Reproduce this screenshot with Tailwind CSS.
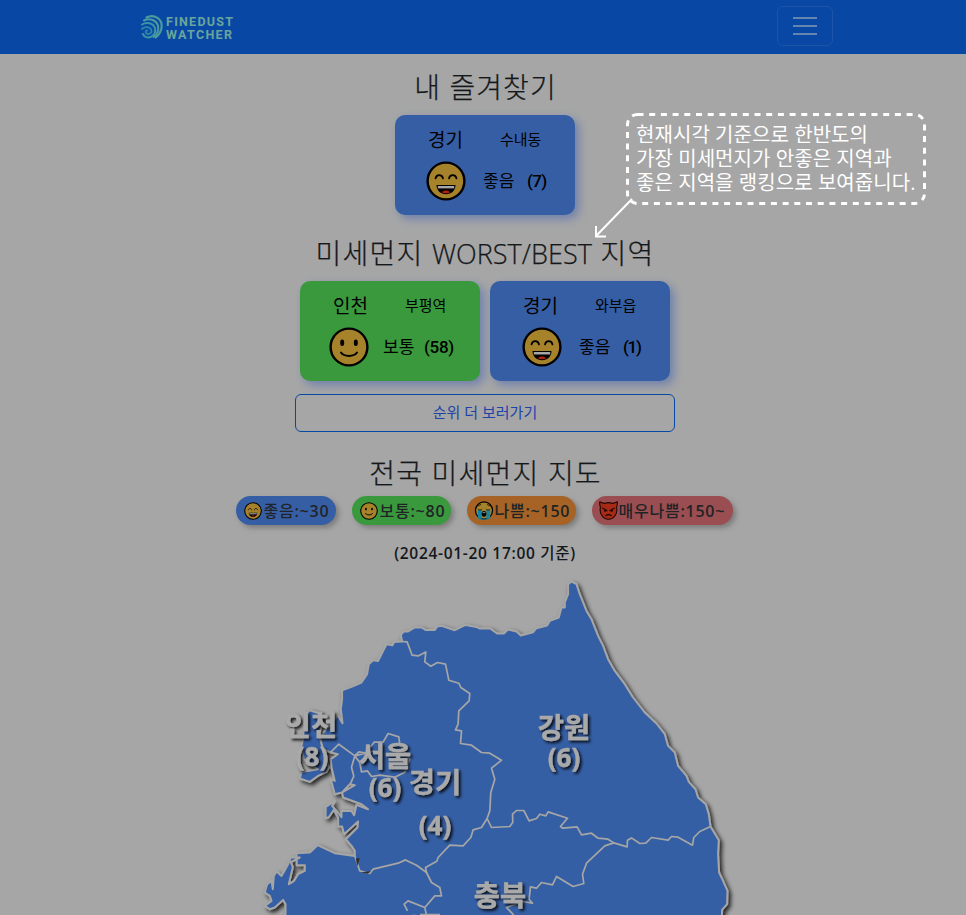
<!DOCTYPE html>
<html lang="ko">
<head>
<meta charset="utf-8">
<title>Finedust Watcher</title>
<script src="https://cdn.jsdelivr.net/npm/@tailwindcss/browser@4"></script>
</head>
<body class="w-[966px] h-[915px] overflow-hidden relative bg-[#a6a6a6] text-[#15181b] font-['Open_Sans','Noto_Sans_CJK_KR',sans-serif]">
<svg width="0" height="0" class="absolute" aria-hidden="true">
  <defs>
    <symbol id="grin" viewBox="0 0 40 40">
      <circle cx="20" cy="20" r="18.4" fill="#a6822a" stroke="#000" stroke-width="2.4"/>
      <path d="M9.5 17.500c.8-4.600 6.700-4.600 7.500 0M23 17.500c.8-4.600 6.700-4.600 7.500 0" fill="none" stroke="#000" stroke-width="1.700" stroke-linecap="round"/>
      <path d="M10.500 24h19c0 5.500-4 9.300-9.500 9.300s-9.500-3.800-9.500-9.300z" fill="#000"/>
      <path d="M11.800 25h16.400v2.400h-16.400z" fill="#a6a6a6"/>
      <path d="M16 31.200c1.500-2.200 6.500-2.200 8 0-1.500 1.400-6.500 1.400-8 0z" fill="#b02010"/>
    </symbol>
    <symbol id="smile" viewBox="0 0 40 40">
      <circle cx="20" cy="20" r="18.400" fill="#a6822a" stroke="#000" stroke-width="2.400"/>
      <ellipse cx="13.200" cy="15.700" rx="2" ry="3.200"/><ellipse cx="26.800" cy="15.700" rx="2" ry="3.200"/>
      <path d="M12 25.500c3 4.500 13 4.500 16 0" fill="none" stroke="#000" stroke-width="2" stroke-linecap="round"/>
    </symbol>
    <symbol id="cry" viewBox="0 0 40 40">
      <circle cx="20" cy="20" r="18" fill="#a6822a" stroke="#000" stroke-width="2.600"/>
      <path d="M7 19h8v18.500H7zM25 19h8v18.500h-8z" fill="#1287a6"/>
      <path d="M11 37h18v2H11z" fill="#1287a6"/>
      <path d="M7 11l7-4M33 11l-7-4M7 17.500c2 2 7 2 9 0M24 17.500c2 2 7 2 9 0" fill="none" stroke="#2c2108" stroke-width="2"/>
      <ellipse cx="20" cy="27" rx="5" ry="6"/><path d="M17 24.500h6" stroke="#a6a6a6" stroke-width="1.800"/>
    </symbol>
    <symbol id="devil" viewBox="0 0 40 40">
      <path d="M1.500 1.500c4 2.500 7 3 10.500 3.500 5-2 11-2 16 0 3.500-.5 6.500-1 10.500-3.500.5 5 0 8-1.500 12 3 12-5 25-17 25s-20-13-17-25c-1.500-4-2-7-1.500-12z" fill="#a62a14" stroke="#1a0502" stroke-width="2.200" stroke-linejoin="round"/>
      <path d="M8 15l9 5.500M32 15l-9 5.500M14.500 31c2.500-3 8.500-3 11 0" fill="none" stroke="#1a0502" stroke-width="2.400" stroke-linecap="round"/>
      <circle cx="13" cy="20.500" r="2.200"/><circle cx="27" cy="20.500" r="2.200"/>
    </symbol>
  </defs>
</svg>

<nav class="h-[54px] bg-[#0848a4] flex items-start justify-between pl-[140px] pr-[133px]">
  <svg class="mt-[12px]" width="96" height="30" viewBox="140 12 96 30">
    <g fill="none" stroke="#4a9aa0" stroke-linecap="round">
      <path d="M146.500 17.500c6-3.500 13.500 0 15 6 1 6-2 11.500-6 14" stroke-width="2.200"/>
      <path d="M144 20.500c6-3 12.500 0 14 5 1 5-1 9-4.500 11.500" stroke-width="2"/>
      <path d="M142 24.500c5-3 11-1.500 12.800 3 1.200 4-.5 7.500-4 9.500-3 1-6.500 0-8-3" stroke-width="2" stroke="#3b95a4"/>
      <path d="M142 29c3-3 8.500-2.500 9.500 1.500.5 3-3.500 4.500-5.500 2.500-1-1.200 0-2.500 1.300-2.500" stroke-width="1.800" stroke="#2c86a6"/>
    </g>
    <g fill="#6aa59b" font-family="Roboto, sans-serif" font-weight="700" font-size="12.500">
      <text x="166" y="26" textLength="67" lengthAdjust="spacing">FINEDUST</text>
      <text x="166" y="39" textLength="66" lengthAdjust="spacing">WATCHER</text>
    </g>
  </svg>
  <button class="mt-[6px] w-[56px] h-[40px] rounded-[6px] border border-[#1c55a6] flex items-center justify-center" aria-label="menu">
    <svg width="24" height="20" viewBox="0 0 24 20" stroke="#6485b0" stroke-width="2"><path d="M0 2h24M0 10h24M0 18h24"/></svg>
  </button>
</nav>

<main class="flex flex-col items-center w-[966px] pl-[4px] [&>h2]:[-webkit-text-stroke:0.25px_#15181b]">
  <h2 class="mt-[15px] h-[36px] leading-[36px] text-[28px] font-light whitespace-nowrap tracking-[1.100px] pl-[1px]">내 즐겨찾기</h2>
  <section class="mt-[10px] w-[180px] h-[100px] rounded-[10px] bg-[#365ea5] shadow-[4px_4px_10px_#6f80ad] text-black pt-[11px]">
    <div class="flex h-[28px] items-center pl-[33px]"><span class="w-[72px] text-[19px]">경기</span><span class="text-[15px] -mt-[2px]">수내동</span></div>
    <div class="flex h-[40px] mt-[7px] items-center pl-[31px]"><svg width="40" height="40"><use href="#grin"/></svg><span class="ml-[17px] w-[44px] text-[17px]">좋음</span><span class="font-[Roboto] font-medium text-[17px] tracking-[-0.6px] pt-[2px]">(7)</span></div>
  </section>

  <h2 class="mt-[20px] h-[36px] leading-[36px] text-[28px] font-light whitespace-nowrap tracking-[1.2px]">미세먼지 <span class="text-[27px] tracking-[0.05px]">WORST/BEST</span> 지역</h2>
  <div class="mt-[10px] flex gap-[10px]">
    <section class="w-[180px] h-[100px] rounded-[10px] bg-[#3a993d] shadow-[4px_4px_10px_#6f80ad] text-black pt-[11px]">
      <div class="flex h-[28px] items-center pl-[33px]"><span class="w-[72px] text-[19px]">인천</span><span class="text-[15px] -mt-[2px]">부평역</span></div>
      <div class="flex h-[40px] mt-[7px] items-center pl-[29px]"><svg width="40" height="40"><use href="#smile"/></svg><span class="ml-[14px] w-[41px] text-[17px]">보통</span><span class="font-[Roboto] font-medium text-[17px] tracking-[-0.3px] pt-[2px]">(58)</span></div>
    </section>
    <section class="w-[180px] h-[100px] rounded-[10px] bg-[#365ea5] shadow-[4px_4px_10px_#6f80ad] text-black pt-[11px]">
      <div class="flex h-[28px] items-center pl-[33px]"><span class="w-[72px] text-[19px]">경기</span><span class="text-[15px] -mt-[2px]">와부읍</span></div>
      <div class="flex h-[40px] mt-[7px] items-center pl-[32px]"><svg width="40" height="40"><use href="#grin"/></svg><span class="ml-[17px] w-[44px] text-[17px]">좋음</span><span class="font-[Roboto] font-medium text-[17px] tracking-[-1.300px] pt-[2px]">(1)</span></div>
    </section>
  </div>
  <button class="mt-[13px] w-[380px] h-[38px] rounded-[6px] border border-[#0848a4] text-[#1d42a8] text-[15px] pb-[2px]">순위 더 보러가기</button>

  <h2 class="mt-[23px] h-[36px] leading-[36px] text-[28px] font-light whitespace-nowrap tracking-[1.2px] pl-[1px]">전국 미세먼지 지도</h2>
  <div class="mt-[5px] -ml-[2px] flex gap-[16px] text-[#212426] text-[16px] font-semibold whitespace-nowrap tracking-[0.75px]">
    <div class="w-[100px] h-[29px] rounded-full bg-[#365ea5] shadow-[3px_3px_5px_#7d7d7d] flex items-center pl-[7px] gap-[1px]"><svg width="20" height="18"><use href="#grin"/></svg><span><span class="font-medium">좋음</span>:~30</span></div>
    <div class="w-[99px] h-[29px] rounded-full bg-[#3a993d] shadow-[3px_3px_5px_#7d7d7d] flex items-center pl-[7px] gap-[1px]"><svg width="20" height="18"><use href="#smile"/></svg><span><span class="font-medium">보통</span>:~80</span></div>
    <div class="w-[109px] h-[29px] rounded-full bg-[#a66325] shadow-[3px_3px_5px_#7d7d7d] flex items-center pl-[7px] gap-[1px]"><svg width="20" height="19"><use href="#cry"/></svg><span><span class="font-medium">나쁨</span>:~150</span></div>
    <div class="w-[141px] h-[29px] rounded-full bg-[#9b4e52] shadow-[3px_3px_5px_#7d7d7d] flex items-center pl-[7px] gap-[1px]"><svg width="19" height="19"><use href="#devil"/></svg><span><span class="font-medium">매우나쁨</span>:150~</span></div>
  </div>
  <p class="mt-[16px] h-[24px] leading-[24px] text-[15.5px] font-semibold whitespace-nowrap tracking-[0.7px]">(2024-01-20 17:00 <span class="font-medium">기준</span>)</p>
</main>

<svg class="block mt-[10px]" width="966" height="340" viewBox="0 575 966 340">
  <defs>
    <filter id="land" x="-10%" y="-10%" width="120%" height="120%"><feDropShadow dx="2.500" dy="2.500" stdDeviation="2" flood-color="#000" flood-opacity=".8"/></filter>
    <filter id="label" x="-20%" y="-20%" width="150%" height="150%"><feDropShadow dx="2" dy="2" stdDeviation="1.800" flood-color="#000" flood-opacity=".9"/></filter>
  </defs>
  <g transform="translate(-.2 -.8)">
  <g filter="url(#land)" fill="#365ea5" stroke="#a6a6a6" stroke-width="2" stroke-linejoin="round">
    <path d="M342.700 724L341 710 342.300 700V691L351.700 687.700 361.700 683.300 367.300 675 369 665 373.300 661 378.300 661.700 386.700 645 392.700 646 394.300 642.700 402.300 642.300 401 635.700 404 632.300H408.300L415 628.300H421.700L425.700 630.700H435L437.700 627 441.700 626.700 455 631 465.700 625.700 476.700 627.700 480 629.300 490 629 497.300 634.300H504L508.300 630.300 516.700 632.300 521 636.300 533.300 633 536.700 629 547.300 626.300 550 621.700 559 618.300 561.700 608.300H565V603.300L568.300 595V585L571.700 582.300 576.700 585 580 595 586.700 611.700 591.700 620 598.300 636.700 603.300 646.700 608.300 660 615 671.700 625 685 633.300 698.300 645 713.300 656.700 724.300 665 735 668.300 746.700 675 753.300 678.300 766.700 686.700 776.700 689 782.700 695.700 790 698.300 798.300 706 805 709 815 710.700 827.300 719 841 718.300 855 719.300 873.300 723.300 881.700 727.700 891.700 727.300 905 722.300 910.700 721.700 930H285.700V905L283.300 900.700 275 908.300 270 910 265 906.700 271.700 901.700 270 896.700 265 893.300 267.300 885 271.700 881.700 273 890 274 876.700 276.700 872.300 281.700 876.700 288.300 865 291 858.300 300 858.300 291 863 293 868 289 885 294 882 298.300 875 305 871.700V866L297 866 296.700 854 310 853.300 317.700 846 335 854 355 856.700V851.700L351.700 846.700 346 840 357.700 828.300 358.300 822.300 344.300 835 342.300 827.300H338.300V818.300L334 810.700 329 818 325.700 819 326 807.700 335 801.700 332.300 806.700 341.700 818V811.700H351.700L354.300 816 356.700 805.700 368.300 810 361.700 805 343.300 798.300 342.300 793.300 355 786 350 785 342.300 793.300 335 795 331 780 335 781.700 331.700 768.300 331 760 338 755 331 753.300 323 750 320 738 338 716z"/>
    <path d="M305 716L310 711 322 715 320 738 323 750 329 768.300 326.700 772.700 318.300 776.700 310 782.700 300 779.300 301.700 772.700 318 770 304 760 301.700 746.700 303 741z"/>
  </g>
  <g fill="none" stroke="#a6a6a6" stroke-width="1.700" stroke-linejoin="round">
    <path d="M402.300 642.300L407.300 642.700 412.300 656 418.300 656.700 426 652.700 425 662.700 431 667 437.700 663.300 445.700 665 449 681 459 684 461 688.300 470 694.300 469.300 701.700 459 711.700 458.300 725 455.700 730.700 461.700 731.700 460.700 744.300 471.700 746 481.700 753.300 490 754 501.700 761 491.700 769 495 780 491 793.300 490 811.700 487.300 819.300 491.700 828.300 510 827.300 513 823 512.700 815 516.700 811.300H524L529.300 821.700 536.700 819.300 540 815 546 816.700 548.300 812.700 567.700 819 560.700 827.300 563 829 577.300 827.700 581.700 835.700 591.700 834 598.300 839 608.300 840 614 843.700 627.300 847.700 627.700 841 631.700 838.700 640 844.300 646 844 651.700 838.300 668.300 841 671.700 837.300 678.300 838 692.700 846 694 838.300 700 832.300 710.700 827.300"/>
    <path d="M614 843.700L605 846.700 586.700 864 582.700 875 584 884.300 573.300 887.300 556.700 877.300 552.700 885.700 541.700 883.300 536.700 889 530.700 887.700 529.300 900 532.700 904 523.300 902.300 506.700 908.300 514 916"/>
    <path d="M487.300 819.300L481.700 828.300 473.300 830.700 471 838.300 463.300 846.700 450 846 438.300 858.300 437 862 425.700 868.300 426.700 873.300 416.700 866 405.700 860.700 398.300 864 373.300 870 370 874.300 360 871.700 355 856.700"/>
    <path d="M426.700 873.300L431.700 883.300 440 888.300 441.700 896.700H435L425 908.300 408.300 901.700 404.300 905 407.700 911.700M425 908.300L426.700 916"/>
    <path d="M331 753L339 745 355 756.700 351.700 768 354 777 350 786M355 756.700L359 752.700 366 754 374.300 743H383.300L388.300 734.300 399 737.700 400 745 410 760 405 773 395 778 380 776 371.700 777.300 367.700 771.700 361.700 772.700 360 763.300 355 756.700M355 756.700L374 752"/>
  </g>
  <path d="M356 859l4 0-2.500 8zM361 873l10-1-3 2.500z" fill="#303030"/>
  </g>
  <g filter="url(#label)" fill="#a9a9a9" stroke="#a9a9a9" stroke-width=".4" text-anchor="middle" font-family="'Open Sans','Noto Sans CJK KR',sans-serif" font-weight="700" font-size="28.500">
    <text x="311" y="736">인천</text><text x="312" y="766" font-size="26">(8)</text>
    <text x="385" y="767">서울</text><text x="385" y="797" font-size="26">(6)</text>
    <text x="435" y="793">경기</text><text x="435" y="835" font-size="26">(4)</text>
    <text x="564" y="738">강원</text><text x="564" y="767" font-size="26">(6)</text>
    <text x="500" y="906">충북</text>
  </g>
  <path d="M412 915.500h4M420 914.500h20" stroke="#a6a6a6" stroke-width="1.500"/>
</svg>

<aside class="absolute left-[590px] top-[108px] w-[340px] h-[134px]">
  <svg class="absolute inset-0" width="340" height="134" viewBox="590 108 340 134" fill="none" stroke="#fff">
    <rect x="627.500" y="114.500" width="297" height="89" rx="10" stroke-width="3" stroke-dasharray="6 5.700"/>
    <path d="M632 199L596 236M596 226v10.500h10" stroke-width="2"/>
  </svg>
  <p class="absolute left-[46px] top-[15px] text-white text-[20px] leading-[24px] whitespace-nowrap tracking-[0.06px]">현재시각 기준으로 한반도의<br>가장 미세먼지가 안좋은 지역과<br>좋은 지역을 랭킹으로 보여줍니다.</p>
</aside>
</body>
</html>
